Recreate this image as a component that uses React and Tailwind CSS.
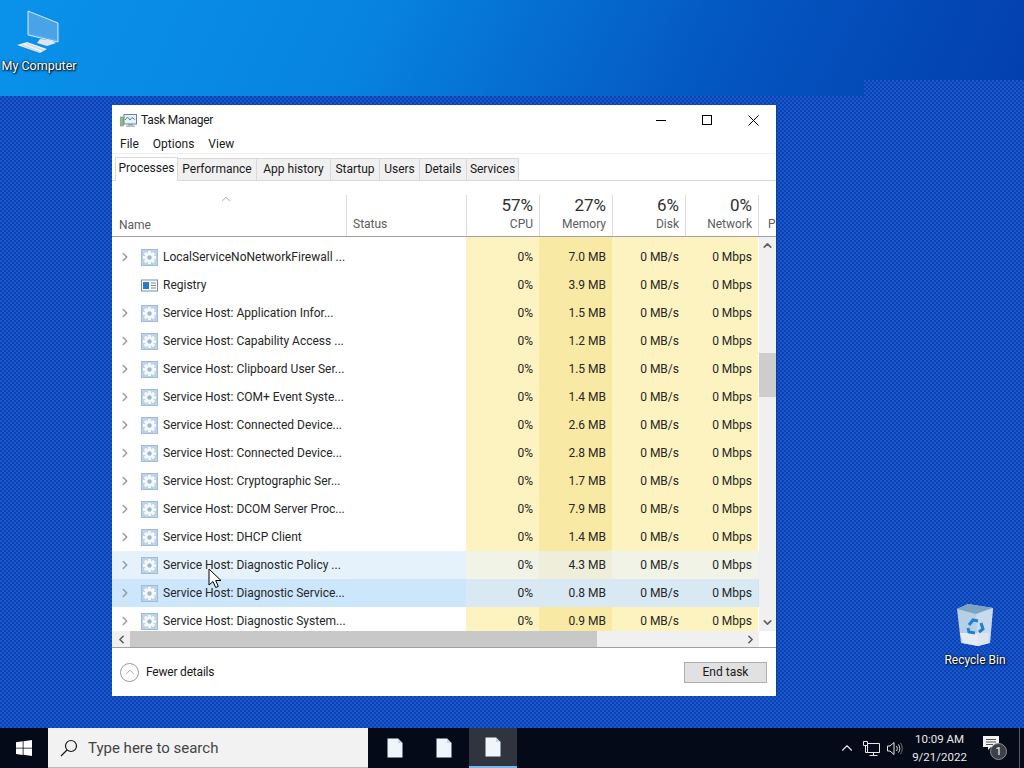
import { ChevronRight, ChevronUp, ChevronDown, ChevronLeft } from 'lucide-react';

const rows = [
  { name: 'LocalServiceNoNetworkFirewall ...', mem: '7.0 MB' },
  { name: 'Registry', mem: '3.9 MB', registry: true },
  { name: 'Service Host: Application Infor...', mem: '1.5 MB' },
  { name: 'Service Host: Capability Access ...', mem: '1.2 MB' },
  { name: 'Service Host: Clipboard User Ser...', mem: '1.5 MB' },
  { name: 'Service Host: COM+ Event Syste...', mem: '1.4 MB' },
  { name: 'Service Host: Connected Device...', mem: '2.6 MB' },
  { name: 'Service Host: Connected Device...', mem: '2.8 MB' },
  { name: 'Service Host: Cryptographic Ser...', mem: '1.7 MB' },
  { name: 'Service Host: DCOM Server Proc...', mem: '7.9 MB' },
  { name: 'Service Host: DHCP Client', mem: '1.4 MB' },
  { name: 'Service Host: Diagnostic Policy ...', mem: '4.3 MB', state: 'hover' },
  { name: 'Service Host: Diagnostic Service...', mem: '0.8 MB', state: 'selected' },
  { name: 'Service Host: Diagnostic System...', mem: '0.9 MB' },
];

const tabs = [
  { label: 'Performance', width: 'w-[79px]' },
  { label: 'App history', width: 'w-[74px]' },
  { label: 'Startup', width: 'w-[49px]' },
  { label: 'Users', width: 'w-[40px]' },
  { label: 'Details', width: 'w-[47px]' },
  { label: 'Services', width: 'w-[52px]' },
];

const GearIcon = () => (
  <svg width="17" height="17" viewBox="0 0 17 17" className="shrink-0">
    <rect width="17" height="17" fill="#9fbcdc" />
    <rect x="1" y="1" width="15" height="15" fill="#bdd2e8" />
    <g fill="#f6f9fc">
      <circle cx="8.500" cy="8.500" r="4.600" />
      <rect x="7" y="2" width="3" height="13" />
      <rect x="2" y="7" width="13" height="3" />
      <rect x="7" y="2" width="3" height="13" transform="rotate(45 8.500 8.500)" />
      <rect x="7" y="2" width="3" height="13" transform="rotate(-45 8.500 8.500)" />
    </g>
    <circle cx="8.500" cy="8.500" r="2.200" fill="#9ab8d8" />
  </svg>
);

const RegistryIcon = () => (
  <svg width="17" height="17" viewBox="0 0 17 17" className="shrink-0">
    <rect x="0.500" y="3" width="16" height="11" fill="#fff" stroke="#6d8fb3" />
    <rect x="2" y="5" width="6" height="7" fill="#2b79c2" />
    <path d="M10 6h5M10 8.500h5M10 11h5" stroke="#7c8896" />
  </svg>
);

const TaskManagerIcon = () => (
  <svg width="17" height="17" viewBox="0 0 17 17">
    <rect x="0.500" y="5" width="3" height="9" fill="#8fbc7a" stroke="#5f8a55" strokeWidth="0.500" />
    <rect x="4" y="2.500" width="12.500" height="9.500" fill="#e8f2fb" stroke="#6f8294" />
    <path d="M5 8l2.500-3 2.500 3 2-2.500 3 2" fill="none" stroke="#3f86c8" />
    <rect x="8" y="12" width="5" height="1.500" fill="#8b9aa8" />
    <rect x="6" y="13.500" width="9" height="1.500" fill="#b0bcc7" />
  </svg>
);

const DocIcon = () => (
  <svg width="16" height="20" viewBox="0 0 16 20">
    <path d="M0.500 0.500h10.500l4.500 4.500v14.500h-15z" fill="#eef5fb" />
    <path d="M11 0.500v4.500h4.500z" fill="#c4d4e2" />
  </svg>
);

const MyComputerIcon = () => (
  <svg width="46" height="44" viewBox="0 0 46 44">
    <path d="M12 1l30 12v19l-30-7z" fill="#59b0ee" stroke="#cfe6f7" strokeWidth="1" />
    <path d="M13 2.500l28 11v16l-28-6z" fill="#4aa3e8" />
    <path d="M24 29l11 1 5 3-9 3-10-3z" fill="#dce6ee" />
    <path d="M1 35l10-3 20 7-7 4z" fill="#e8eef3" />
    <path d="M6 35l18 7M10 33.500l18 7" stroke="#b9c6d1" strokeWidth="0.700" />
  </svg>
);

const RecycleBinIcon = () => (
  <svg width="40" height="44" viewBox="0 0 40 44">
    <path d="M2 6l11-5 25 4-3 35-12 3-17-3z" fill="#b6cfe4" />
    <path d="M2 6l11-5 25 4-17 6z" fill="#7ea4c4" />
    <path d="M5 30l29 0-1 10-10 3-15-3z" fill="#e5ebf0" />
    <path d="M21 11l17-6-3 35-12 3z" fill="#d5e3ef" fillOpacity="0.600" />
    <g fill="none" stroke="#1f7fd0" strokeWidth="3">
      <path d="M14 22l4-5 5 1" />
      <path d="M26 20l2 6-4 3" />
      <path d="M20 30l-6-1-1-4" />
    </g>
  </svg>
);

const WindowsLogo = () => (
  <svg width="16" height="16" viewBox="0 0 16 16" fill="#fff">
    <path d="M0 2.200l6.700-.9v6.400H0zM7.500 1.200L16 0v7.700H7.500zM0 8.500h6.700v6.400L0 14zM7.500 8.500H16V16l-8.500-1.200z" />
  </svg>
);

const SearchIcon = () => (
  <svg width="18" height="18" viewBox="0 0 18 18" fill="none" stroke="#1a1a1a" strokeWidth="1.200">
    <circle cx="11" cy="7" r="5.500" />
    <path d="M7 11l-6 6" />
  </svg>
);

const NetworkIcon = () => (
  <svg width="17" height="15" viewBox="0 0 17 15" fill="none" stroke="#e6e6e6">
    <path d="M4.500 2.500h12v9h-12z" />
    <path d="M0.500 0.500h4v4h-4zM2.500 4.500v7h14M10.500 11.500v3M6.500 14.500h8" />
  </svg>
);

const SpeakerIcon = () => (
  <svg width="16" height="15" viewBox="0 0 16 15" fill="none" stroke="#e6e6e6">
    <path d="M0.500 5h2.500l4-3.500v12l-4-3.500h-2.500z" />
    <path d="M9.500 5c1 1.500 1 3.500 0 5M11.500 3.500c1.700 2.500 1.700 5.500 0 8" />
    <path d="M13.500 2c2.300 3.300 2.300 7.700 0 11" stroke="#777" />
  </svg>
);

const ActionCenterIcon = () => (
  <div className="relative w-[24px] h-[24px]">
    <svg width="16" height="15" viewBox="0 0 16 15" className="absolute left-0 top-0">
      <path d="M0 0h16v11h-8l-3 3v-3h-5z" fill="#f2f2f2" />
      <path d="M3 3.500h10M3 6h10M3 8.500h7" stroke="#555" />
    </svg>
    <div className="absolute left-[7px] top-[7px] w-[17px] h-[17px] rounded-full bg-[#3a3f48] border border-[#8b8f96] text-white text-[11px] leading-[15px] text-center">1</div>
  </div>
);

const Cursor = () => (
  <svg width="14" height="21" viewBox="0 0 14 21" className="absolute left-[208px] top-[568px] z-10">
    <path d="M1 1v16l4-3.500 2.700 6 2.600-1.100-2.600-5.900H13z" fill="#fff" stroke="#000" strokeWidth="1" />
  </svg>
);

const Stat = ({ bg, children }) => (
  <div className={`w-[73px] ${bg} text-right shrink-0 pr-[6px] leading-[28px] h-full`}>{children}</div>
);

const HeaderCell = ({ pct, label }) => (
  <div className="w-[73px] shrink-0 h-[41px] border-l border-[#dcdcdc] pr-[6px] text-right">
    <div className="text-[17px] leading-[20px] text-[#303030]">{pct}</div>
    <div className="text-[12px] leading-[19px] text-[#5c5c5c]">{label}</div>
  </div>
);

const ProcessRow = ({ row }) => {
  const isHover = row.state === 'hover';
  const isSelected = row.state === 'selected';
  const nameBg = isHover ? 'bg-[#e5f2fc]' : isSelected ? 'bg-[#cce6fb]' : 'bg-white';
  const yellow = isHover ? 'bg-[#f0f3e6]' : isSelected ? 'bg-[#d8e9f3]' : 'bg-[#fdf3c0]';
  const deeper = isHover ? 'bg-[#eeeeda]' : isSelected ? 'bg-[#d8e9f3]' : 'bg-[#f8e9a4]';

  return (
    <div className={`flex h-[28px] text-[12px] text-[#262626] ${nameBg}`}>
      <div className="w-[354px] shrink-0 flex items-center">
        <div className="w-[29px] flex shrink-0 pl-[6px]">
          {!row.registry && <ChevronRight size={14} className="text-[#9a9a9a]" strokeWidth={2.500} />}
        </div>
        {row.registry ? <RegistryIcon /> : <GearIcon />}
        <span className="ml-[5px] whitespace-nowrap">{row.name}</span>
      </div>
      <Stat bg={yellow}>0%</Stat>
      <Stat bg={deeper}>{row.mem}</Stat>
      <Stat bg={yellow}>0 MB/s</Stat>
      <Stat bg={yellow}>0 Mbps</Stat>
    </div>
  );
};

const TaskManager = () => (
  <div className="absolute left-[112px] top-[105px] w-[665px] h-[591px] bg-white flex flex-col border-r border-[#0f3f8f] text-[#1a1a1a] [font-family:Roboto,sans-serif]">
    <div className="h-[30px] flex items-center shrink-0">
      <div className="ml-[8px] mr-[4px] flex"><TaskManagerIcon /></div>
      <span className="text-[12px] tracking-[-0.3px]">Task Manager</span>
      <div className="ml-auto flex items-center">
        <div className="w-[46px] flex justify-center"><div className="w-[10px] h-px bg-black" /></div>
        <div className="w-[46px] flex justify-center"><div className="w-[10px] h-[10px] border border-black" /></div>
        <div className="w-[46px] flex justify-center">
          <svg width="11" height="11" viewBox="0 0 11 11" stroke="#000"><path d="M0.500 0.500l10 10M10.500 0.500l-10 10" /></svg>
        </div>
      </div>
    </div>

    <div className="h-[18px] flex items-center gap-[14px] pl-[8px] text-[12px] shrink-0">
      <span>File</span>
      <span>Options</span>
      <span>View</span>
    </div>

    <div className="h-[28px] pt-[3px] shrink-0 border-t border-[#f0f0f0]">
      <div className="h-[24px] border-b border-[#d9d9d9] flex items-end pl-[3px] text-[12px]">
        <div className="w-[63px] h-[24px] -mb-px bg-white border border-b-0 border-[#d9d9d9] text-center leading-[21px]">Processes</div>
        {tabs.map((tab) => (
          <div key={tab.label} className={`${tab.width} h-[22px] bg-[#f0f0f0] border-r border-t border-[#d9d9d9] text-center leading-[21px]`}>{tab.label}</div>
        ))}
      </div>
    </div>

    <div className="h-[56px] border-b border-[#a0a0a0] flex items-end shrink-0 overflow-hidden relative">
      <ChevronUp size={14} className="absolute left-[107px] top-[11px] text-[#9a9a9a]" strokeWidth={1.500} />
      <div className="w-[234px] shrink-0 pl-[7px] text-[12px] leading-[22px] text-[#5c5c5c]">Name</div>
      <div className="w-[120px] shrink-0 h-[41px] border-l border-[#dcdcdc] pl-[6px] pt-[20px] text-[12px] leading-[19px] text-[#5c5c5c]">Status</div>
      <HeaderCell pct="57%" label="CPU" />
      <HeaderCell pct="27%" label="Memory" />
      <HeaderCell pct="6%" label="Disk" />
      <HeaderCell pct="0%" label="Network" />
      <div className="h-[41px] border-l border-[#dcdcdc] pl-[9px] pt-[20px] text-[12px] leading-[19px] text-[#5c5c5c]">P</div>
    </div>

    <div className="h-[394px] flex shrink-0">
      <div className="w-[647px] shrink-0 overflow-hidden">
        <div className="flex h-[6px]">
          <div className="w-[354px] shrink-0" />
          <div className="w-[73px] shrink-0 bg-[#fdf3c0]" />
          <div className="w-[73px] shrink-0 bg-[#f8e9a4]" />
          <div className="w-[146px] shrink-0 bg-[#fdf3c0]" />
        </div>
        {rows.map((row) => <ProcessRow key={row.name + row.mem} row={row} />)}
      </div>
      <div className="flex-1 bg-[#f0f0f0] flex flex-col items-center">
        <div className="h-[17px] flex items-center"><ChevronUp size={13} strokeWidth={3} className="text-[#606060]" /></div>
        <div className="w-full h-[44px] mt-[99px] bg-[#cdcdcd]" />
        <div className="h-[17px] mt-auto flex items-center"><ChevronDown size={13} strokeWidth={3} className="text-[#606060]" /></div>
      </div>
    </div>

    <div className="h-[17px] flex shrink-0 border-b border-[#a0a0a0]">
      <div className="w-[18px] bg-[#f0f0f0] flex items-center justify-center"><ChevronLeft size={13} strokeWidth={3} className="text-[#606060]" /></div>
      <div className="w-[467px] bg-[#c8c8c8]" />
      <div className="w-[162px] bg-[#f0f0f0] flex items-center justify-end pr-[2px]"><ChevronRight size={13} strokeWidth={3} className="text-[#606060]" /></div>
    </div>

    <div className="flex-1 flex items-center justify-between pl-[8px] pr-[9px]">
      <div className="flex items-center text-[12px] tracking-[-0.2px]">
        <div className="w-[19px] h-[19px] rounded-full border border-[#9a9a9a] flex items-center justify-center mr-[7px]">
          <ChevronUp size={14} className="text-[#9a9a9a]" strokeWidth={1.500} />
        </div>
        Fewer details
      </div>
      <div className="w-[83px] h-[21px] bg-[#e1e1e1] border border-[#adadad] text-center text-[12px] leading-[19px]">End task</div>
    </div>
  </div>
);

const App = () => (
  <div className="relative w-[1024px] h-[768px] overflow-hidden flex flex-col [font-family:Roboto,sans-serif]">
    <div className="h-[96px] shrink-0 bg-[linear-gradient(115deg,#0a92ea_0%,#0784e0_35%,#0456c0_70%,#033fae_100%)]" />
    <div className="flex-1 bg-[repeating-conic-gradient(#0a42b4_0%_25%,#1b58cc_0%_50%)] bg-[length:4px_4px]" />
    <div className="absolute left-[864px] top-[80px] w-[160px] h-[16px] bg-[repeating-conic-gradient(#0a42b4_0%_25%,#1b58cc_0%_50%)] bg-[length:4px_4px]" />

    <div className="absolute left-0 top-[10px] w-[78px] flex flex-col items-center text-white text-[12.500px]">
      <MyComputerIcon />
      <span className="mt-[3px] [text-shadow:1px_1px_2px_#000,0_0_2px_#000]">My Computer</span>
    </div>
    <div className="absolute left-[936px] top-[603px] w-[78px] flex flex-col items-center text-white text-[12px]">
      <RecycleBinIcon />
      <span className="mt-[4px] [text-shadow:1px_1px_2px_#000,0_0_2px_#000]">Recycle Bin</span>
    </div>

    <TaskManager />
    <Cursor />

    <div className="h-[40px] shrink-0 bg-[#050a18] flex items-center text-white z-10">
      <div className="w-[48px] flex justify-center"><WindowsLogo /></div>
      <div className="w-[320px] h-full bg-[#f2f2f2] border-b border-[#bbb] flex items-center pl-[12px] pt-[1px] text-[#444] text-[15px]">
        <SearchIcon />
        <span className="ml-[10px]">Type here to search</span>
      </div>
      <div className="w-[49px] ml-[2px] h-full flex items-center justify-center"><DocIcon /></div>
      <div className="w-[49px] h-full flex items-center justify-center"><DocIcon /></div>
      <div className="w-[48px] ml-[1px] h-full flex items-center justify-center bg-[#2f343e] border-b-2 border-[#76b9ed]"><DocIcon /></div>
      <div className="ml-auto flex items-center h-full">
        <ChevronUp size={18} strokeWidth={1.500} className="text-[#e6e6e6] mr-[7px]" />
        <NetworkIcon />
        <div className="ml-[7px] flex"><SpeakerIcon /></div>
        <div className="w-[75px] -ml-[1px] text-center text-[11.500px] leading-[18px] text-[#e8e8e8]">
          <div>10:09 AM</div>
          <div>9/21/2022</div>
        </div>
        <div className="ml-[6px]"><ActionCenterIcon /></div>
        <div className="w-px h-full bg-[#555a63] ml-[12px] mr-[4px]" />
      </div>
    </div>
  </div>
);

export default App;
